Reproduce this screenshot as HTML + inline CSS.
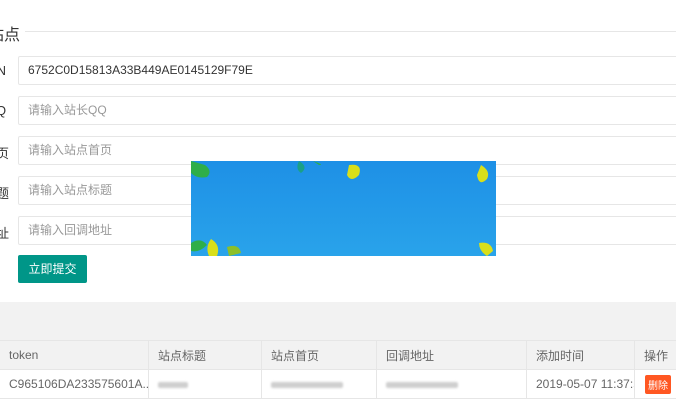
<!DOCTYPE html>
<html><head><meta charset="utf-8"><style>
body{margin:0;width:676px;height:418px;overflow:hidden;background:#fff;font-family:"Liberation Sans","Noto Sans CJK SC",sans-serif;position:relative}
.abs{position:absolute}
.title{left:-12px;top:21px;font-size:16px;color:#333}
.line{left:25px;top:31px;width:651px;height:1px;background:#e6e6e6}
.lab{left:-4px;font-size:13px;color:#333;width:10px;text-align:right}
.inp{left:18px;width:670px;border:1px solid #e6e6e6;border-radius:2px;font-size:12px;color:#999;line-height:27px;padding-left:9px;box-sizing:border-box;height:29px}
.btn{left:18px;top:255px;width:69px;height:28px;background:#009688;color:#fff;font-size:12px;line-height:28px;text-align:center;border-radius:2px}
.band{left:0;top:302px;width:676px;height:38px;background:#f2f2f2}
table{position:absolute;left:-1px;top:340px;border-collapse:collapse;font-size:12px;color:#666;table-layout:fixed;width:715px}
td{border:1px solid #e6e6e6;padding:0 0 0 9px;height:28px;white-space:nowrap;overflow:hidden}
tr.h td{background:#f2f2f2}
.blur{display:inline-block;height:6px;background:#cfcfcf;border-radius:2px;filter:blur(1px)}
</style></head><body>
<div class="abs title">站点</div>
<div class="abs line"></div>
<div class="abs lab" style="top:63px">N</div>
<div class="abs inp" style="top:56px;color:#333">6752C0D15813A33B449AE0145129F79E</div>
<div class="abs lab" style="top:103px">Q</div>
<div class="abs inp" style="top:96px">请输入站长QQ</div>
<div class="abs lab" style="top:143px">页</div>
<div class="abs inp" style="top:136px">请输入站点首页</div>
<div class="abs lab" style="top:183px">题</div>
<div class="abs inp" style="top:176px">请输入站点标题</div>
<div class="abs lab" style="top:223px">址</div>
<div class="abs inp" style="top:216px">请输入回调地址</div>
<div class="abs btn">立即提交</div>
<div class="abs band"></div>
<table>
<colgroup><col style="width:149px"><col style="width:113px"><col style="width:115px"><col style="width:150px"><col style="width:108px"><col style="width:80px"></colgroup>
<tr class="h"><td>token</td><td>站点标题</td><td>站点首页</td><td>回调地址</td><td>添加时间</td><td>操作</td></tr>
<tr><td>C965106DA233575601A...</td><td><span class="blur" style="width:30px"></span></td><td><span class="blur" style="width:72px"></span></td><td><span class="blur" style="width:72px"></span></td><td>2019-05-07 11:37:5</td><td style="padding-left:10px"><span style="display:inline-block;background:#ff5722;color:#fff;font-size:10px;padding:2px 3px;border-radius:2px">删除</span></td></tr>
</table>
<svg class="abs" style="left:191px;top:161px" width="305" height="95">
<defs><linearGradient id="g" x1="0" y1="0" x2="0" y2="1"><stop offset="0" stop-color="#1e90e6"/><stop offset="1" stop-color="#29a3ea"/></linearGradient></defs>
<rect width="305" height="95" fill="url(#g)"/>
<path d="M0 0 L14 4 Q22 10 16 16 Q6 18 0 12Z" fill="#2fae4a"/>
<path d="M108 0 Q118 6 110 12 Q104 8 108 0Z" fill="#1aa087"/>
<path d="M122 0 Q134 4 128 4Z" fill="#2fae4a"/>
<path d="M158 4 Q172 2 168 14 Q160 22 156 14Z" fill="#d9df1a"/>
<path d="M290 4 Q300 10 296 18 Q288 26 286 14Z" fill="#d9df1a"/>
<path d="M0 82 Q10 76 16 84 Q8 92 0 90Z" fill="#2fae4a"/>
<path d="M20 78 Q30 84 26 95 L18 95 Q14 86 20 78Z" fill="#d9df1a"/>
<path d="M36 86 Q48 82 50 92 L38 95Z" fill="#8bbf2a"/>
<path d="M288 82 Q300 80 302 90 L296 95 Q288 90 288 82Z" fill="#d9df1a"/>
</svg>
</body></html>
